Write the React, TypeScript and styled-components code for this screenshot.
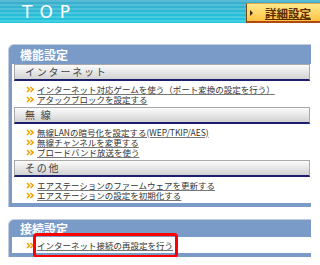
import styled, {createGlobalStyle} from "styled-components";

const GlobalStyle = createGlobalStyle`
  html, body {
    margin: 0;
    padding: 0;
    background: #fff;
  }
  body {
    font-family: "Noto Sans CJK JP", "Noto Sans", sans-serif;
  }
`;

const Header = styled.div`
  display: flex;
  align-items: flex-end;
  height: 23px;
  background: repeating-linear-gradient(to bottom, rgba(255, 255, 255, 0.16) 0 2px, rgba(255, 255, 255, 0) 2px 4px),
  linear-gradient(#3aaccb, #1fc7df);
`;

const PageTitle = styled.h1`
  margin: 0 0 0 22px;
  align-self: center;
  font: 17px "DejaVu Sans", sans-serif;
  letter-spacing: 7px;
  color: #fff;
`;

const DetailButton = styled.a`
  margin-left: auto;
  width: 70px;
  height: 17px;
  display: flex;
  align-items: center;
  padding-left: 3px;
  border-left: 1px solid #7a4a10;
  border-top: 1px solid #e7a84a;
  border-bottom: 2px solid #b04a10;
  background: linear-gradient(#ffe98e, #ffc344);
  cursor: pointer;
`;

const Arrow = styled.span`
  width: 0;
  height: 0;
  border-left: 3px solid #3a2a10;
  border-top: 3px solid transparent;
  border-bottom: 3px solid transparent;
  margin-right: 12px;
`;

const DetailLabel = styled.span`
  font-size: 11.5px;
  font-weight: bold;
  color: #5a2c00;
  text-decoration: underline;
  white-space: nowrap;
`;

const Panel = styled.section<{ $top: number }>`
  margin: ${p => p.$top}px 0 0 8px;
  width: 302px;
  border-top: 1px solid #c4ccdc;
  border-left: 1px solid #c4ccdc;
  border-top-left-radius: 6px;
  overflow: hidden;
  background: #7a9ac8;
  padding-bottom: 4px;
`;

const PanelTitle = styled.div<{ $h: number }>`
  height: ${p => p.$h}px;
  line-height: ${p => p.$h}px;
  padding-left: 11px;
  color: #fff;
  font-size: 12px;
  font-weight: bold;
`;

const PanelBody = styled.div`
  margin-left: 3px;
  background: #fff;
  padding: 0 1px 0 2px;
`;

const SubHead = styled.div`
  height: 14px;
  line-height: 14px;
  border: 1px solid #a9a9a9;
  border-bottom: 2px solid #1b1f6e;
  background: linear-gradient(#fbfbfb, #d2d2d2);
  padding-left: 10px;
  font-size: 10px;
  letter-spacing: 1.8px;
  color: #444;
`;

const LinkList = styled.ul`
  list-style: none;
  margin: 0;
  padding: 3px 0 3px 12px;
`;

const LinkRow = styled.li`
  display: flex;
  align-items: center;
  height: 10px;
`;

const LinkText = styled.a`
  position: relative;
  display: inline-block;
  height: 10px;
  margin-left: 3px;
  font-size: 8.5px;
  line-height: 10px;
  color: #333;
  text-decoration: underline;
  text-decoration-color: #777;
  white-space: nowrap;
`;

const Highlight = styled.span`
  position: absolute;
  left: -4px;
  right: -5px;
  top: -7px;
  bottom: -8px;
  border: 3px solid #f00;
  border-radius: 4px;
`;

const Chevrons = () => (
    <svg width="8" height="7" viewBox="0 0 8 7">
        <path d="M1 1 L3.5 3.5 L1 6 M4.5 1 L7 3.5 L4.5 6" fill="none" stroke="#f5a400" strokeWidth="1.6"/>
    </svg>
);

const sections = [
    {title: "インターネット", links: ["インターネット対応ゲームを使う（ポート変換の設定を行う）", "アタックブロックを設定する"]},
    {title: "無 線", links: ["無線LANの暗号化を設定する(WEP/TKIP/AES)", "無線チャンネルを変更する", "ブロードバンド放送を使う"]},
    {title: "その他", links: ["エアステーションのファームウェアを更新する", "エアステーションの設定を初期化する"]},
];

const App = () => {
    return (
        <>
            <GlobalStyle/>
            <Header>
                <PageTitle>TOP</PageTitle>
                <DetailButton>
                    <Arrow/>
                    <DetailLabel>詳細設定</DetailLabel>
                </DetailButton>
            </Header>

            <Panel $top={21}>
                <PanelTitle $h={19}>機能設定</PanelTitle>
                <PanelBody>
                    {sections.map(s => (
                        <div key={s.title}>
                            <SubHead>{s.title}</SubHead>
                            <LinkList>
                                {s.links.map(l => (
                                    <LinkRow key={l}>
                                        <Chevrons/>
                                        <LinkText>{l}</LinkText>
                                    </LinkRow>
                                ))}
                            </LinkList>
                        </div>
                    ))}
                </PanelBody>
            </Panel>

            <Panel $top={12}>
                <PanelTitle $h={17}>接続設定</PanelTitle>
                <PanelBody>
                    <LinkList>
                        <LinkRow>
                            <Chevrons/>
                            <LinkText>
                                インターネット接続の再設定を行う
                                <Highlight/>
                            </LinkText>
                        </LinkRow>
                    </LinkList>
                </PanelBody>
            </Panel>
        </>
    );
}

export default App;
